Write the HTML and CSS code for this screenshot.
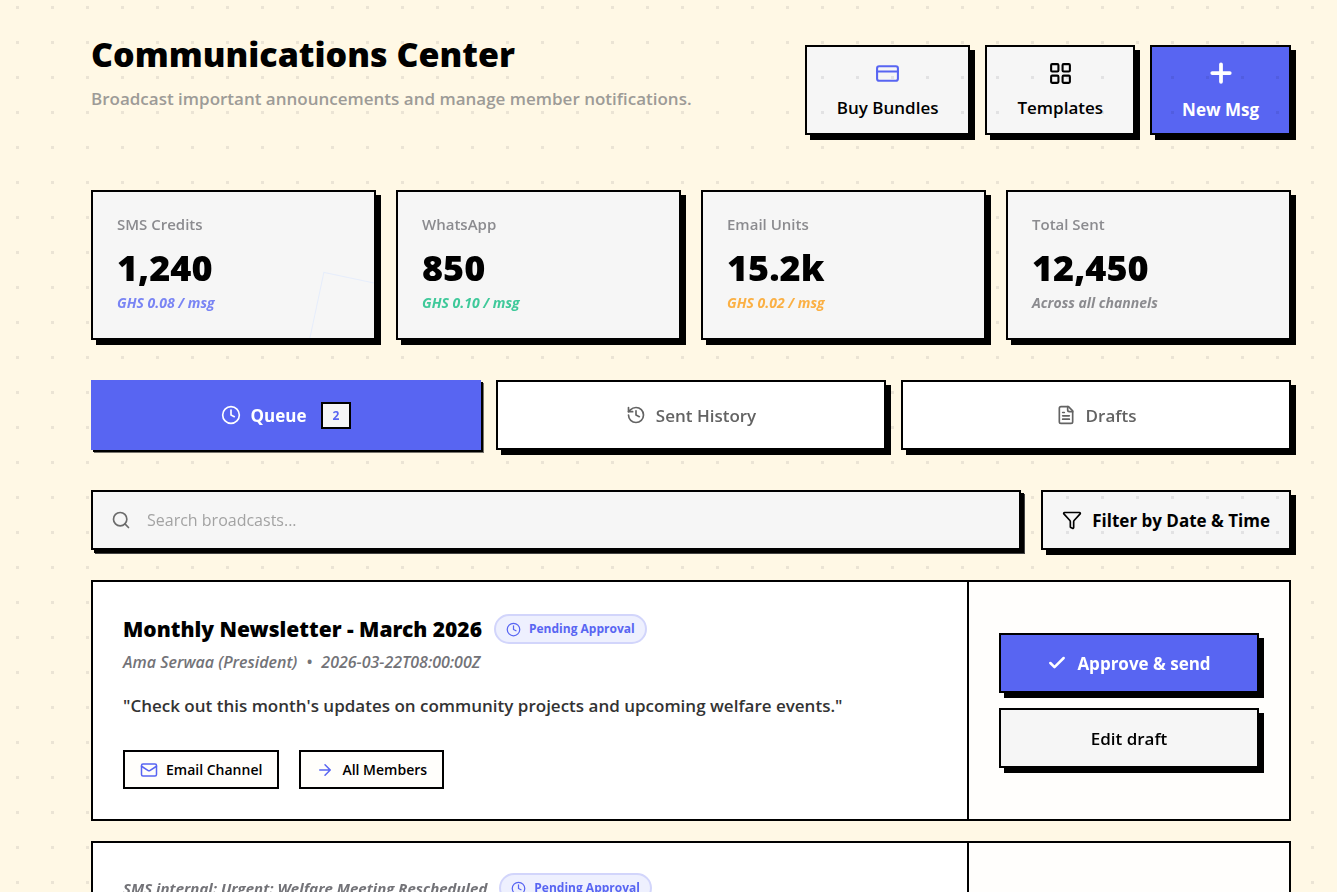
FILE: index.html
```html
<!DOCTYPE html>
<html lang="en">
<head>
<meta charset="utf-8">
<title>Communications Center</title>
<meta name="viewport" content="width=device-width, initial-scale=1">
<link rel="stylesheet" href="styles.css">
</head>
<body>
<svg class="sprite" aria-hidden="true">
  <symbol id="i-card" viewBox="0 0 24 24"><rect x="2" y="5" width="20" height="14" rx="2"/><path d="M2 10h20"/></symbol>
  <symbol id="i-grid" viewBox="0 0 24 24"><rect x="3" y="3" width="7" height="7" rx="1"/><rect x="14" y="3" width="7" height="7" rx="1"/><rect x="14" y="14" width="7" height="7" rx="1"/><rect x="3" y="14" width="7" height="7" rx="1"/></symbol>
  <symbol id="i-plus" viewBox="0 0 24 24"><path d="M5 12h14M12 5v14"/></symbol>
  <symbol id="i-clock" viewBox="0 0 24 24"><circle cx="12" cy="12" r="10"/><path d="M12 6v6l4 2"/></symbol>
  <symbol id="i-history" viewBox="0 0 24 24"><path d="M3 12a9 9 0 1 0 9-9 9.75 9.75 0 0 0-6.74 2.74L3 8"/><path d="M3 3v5h5M12 7v5l4 2"/></symbol>
  <symbol id="i-file" viewBox="0 0 24 24"><path d="M15 2H6a2 2 0 0 0-2 2v16a2 2 0 0 0 2 2h12a2 2 0 0 0 2-2V7Z"/><path d="M14 2v4a2 2 0 0 0 2 2h4M10 9H8M16 13H8M16 17H8"/></symbol>
  <symbol id="i-search" viewBox="0 0 24 24"><circle cx="11" cy="11" r="8"/><path d="m21 21-4.3-4.3"/></symbol>
  <symbol id="i-funnel" viewBox="0 0 24 24"><path d="M10 20a1 1 0 0 0 .553.895l2 1A1 1 0 0 0 14 21v-7a2 2 0 0 1 .517-1.341L21.74 4.67A1 1 0 0 0 21 3H3a1 1 0 0 0-.742 1.67l7.225 7.989A2 2 0 0 1 10 14z"/></symbol>
  <symbol id="i-mail" viewBox="0 0 24 24"><rect x="2" y="4" width="20" height="16" rx="2"/><path d="m22 7-8.97 5.7a1.94 1.94 0 0 1-2.06 0L2 7"/></symbol>
  <symbol id="i-arrow" viewBox="0 0 24 24"><path d="M5 12h14M12 5l7 7-7 7"/></symbol>
  <symbol id="i-check" viewBox="0 0 24 24"><path d="M20 6 9 17l-5-5"/></symbol>
</svg>

<main class="page">
  <header class="header">
    <div class="heading">
      <h1 class="title">Communications Center</h1>
      <p class="subtitle">Broadcast important announcements and manage member notifications.</p>
    </div>
    <div class="header-actions">
      <button class="btn btn-stack" type="button"><svg class="icon icon-lg accent" aria-hidden="true"><use href="#i-card"/></svg>Buy Bundles</button>
      <button class="btn btn-stack" type="button"><svg class="icon icon-lg" aria-hidden="true"><use href="#i-grid"/></svg>Templates</button>
      <button class="btn btn-stack btn-primary" type="button"><svg class="icon icon-xl" aria-hidden="true"><use href="#i-plus"/></svg>New Msg</button>
    </div>
  </header>

  <section class="stats" aria-label="Credit balances">
    <article class="stat">
      <p class="stat-label">SMS Credits</p>
      <p class="stat-value">1,240</p>
      <p class="stat-note note-blue">GHS 0.08 / msg</p>
      <span class="stat-deco"></span>
    </article>
    <article class="stat">
      <p class="stat-label">WhatsApp</p>
      <p class="stat-value">850</p>
      <p class="stat-note note-green">GHS 0.10 / msg</p>
    </article>
    <article class="stat">
      <p class="stat-label">Email Units</p>
      <p class="stat-value">15.2k</p>
      <p class="stat-note note-orange">GHS 0.02 / msg</p>
    </article>
    <article class="stat">
      <p class="stat-label">Total Sent</p>
      <p class="stat-value">12,450</p>
      <p class="stat-note note-gray">Across all channels</p>
    </article>
  </section>

  <nav class="tabs" aria-label="Broadcast views">
    <button class="tab tab-active" type="button"><svg class="icon" aria-hidden="true"><use href="#i-clock"/></svg>Queue<span class="count">2</span></button>
    <button class="tab" type="button"><svg class="icon" aria-hidden="true"><use href="#i-history"/></svg>Sent History</button>
    <button class="tab" type="button"><svg class="icon" aria-hidden="true"><use href="#i-file"/></svg>Drafts</button>
  </nav>

  <div class="toolbar">
    <label class="search"><svg class="icon" aria-hidden="true"><use href="#i-search"/></svg><input class="search-input" type="text" placeholder="Search broadcasts..." aria-label="Search broadcasts"></label>
    <button class="btn btn-filter" type="button"><svg class="icon" aria-hidden="true"><use href="#i-funnel"/></svg>Filter by Date &amp; Time</button>
  </div>

  <section class="list" aria-label="Queued broadcasts">
    <article class="item">
      <div class="item-body">
        <div class="item-head">
          <h2 class="item-title">Monthly Newsletter - March 2026</h2>
          <span class="pill"><svg class="icon icon-xs" aria-hidden="true"><use href="#i-clock"/></svg>Pending Approval</span>
        </div>
        <p class="meta"><span>Ama Serwaa (President)</span><span>•</span><span>2026-03-22T08:00:00Z</span></p>
        <p class="message">"Check out this month's updates on community projects and upcoming welfare events."</p>
        <div class="chips">
          <span class="chip"><svg class="icon icon-sm accent" aria-hidden="true"><use href="#i-mail"/></svg>Email Channel</span>
          <span class="chip"><svg class="icon icon-sm accent" aria-hidden="true"><use href="#i-arrow"/></svg>All Members</span>
        </div>
      </div>
      <div class="item-actions">
        <button class="btn btn-wide btn-primary" type="button"><svg class="icon icon-bold" aria-hidden="true"><use href="#i-check"/></svg>Approve &amp; send</button>
        <button class="btn btn-wide" type="button">Edit draft</button>
      </div>
    </article>
    <article class="item">
      <div class="item-body">
        <div class="item-head item-head-plain">
          <h2 class="item-note">SMS internal: Urgent: Welfare Meeting Rescheduled</h2>
          <span class="pill"><svg class="icon icon-xs" aria-hidden="true"><use href="#i-clock"/></svg>Pending Approval</span>
        </div>
      </div>
      <div class="item-actions"></div>
    </article>
  </section>
</main>
</body>
</html>
```
FILE: styles.css
```css
:root {
  --blue: #5865f2;
  --cream: #fff8e5;
  --panel: #f6f6f6;
  --text: "Open Sans", "Noto Sans", sans-serif;
  --display: "Noto Sans", "Open Sans", sans-serif;
}

* { box-sizing: border-box; }

body {
  margin: 0;
  background: var(--cream);
  color: #000;
  font-family: var(--text);
  font-size: 17px;
  line-height: 25px;
}

/* dotted texture laid over the page, below the raised sections */
body::before {
  content: "";
  position: fixed;
  inset: 0;
  z-index: 1;
  pointer-events: none;
  background-image: conic-gradient(from 90deg at 32px 32px, rgba(0, 0, 20, 0.08) 90deg, transparent 0);
  background-size: 35px 35px;
  background-position: 19px 9px;
}

h1, h2, p { margin: 0; }
button, input { font: inherit; color: inherit; }
button { cursor: pointer; }

.sprite { display: none; }

.icon {
  flex: none;
  width: 20px;
  height: 20px;
  fill: none;
  stroke: currentColor;
  stroke-width: 2;
  stroke-linecap: round;
  stroke-linejoin: round;
}
.icon-xs { width: 15px; height: 15px; }
.icon-sm { width: 18px; height: 18px; }
.icon-lg { width: 25px; height: 25px; }
.icon-xl { width: 30px; height: 30px; stroke-width: 3; }
.icon-bold { stroke-width: 3; }
.accent { color: var(--blue); }

.page { padding: 34px 46px 40px 91px; }

.header {
  display: flex;
  justify-content: space-between;
  gap: 20px;
  margin-bottom: 55px;
}
.title {
  font-family: var(--display);
  font-size: 34px;
  line-height: 40px;
  font-weight: 900;
}
.subtitle {
  margin-top: 12px;
  line-height: 26px;
  font-weight: 600;
  color: #9d9b97;
}
.header-actions {
  display: flex;
  gap: 15px;
  padding-top: 11px;
}

.btn {
  display: flex;
  align-items: center;
  justify-content: center;
  gap: 10px;
  border: 2px solid #000;
  background: var(--panel);
  box-shadow: 5px 5px 0 #000;
  font-weight: 600;
  white-space: nowrap;
}
.btn-primary {
  background: var(--blue);
  color: #fff;
  font-weight: 700;
}
.btn-stack {
  flex-direction: column;
  gap: 9px;
  height: 90px;
  padding: 0 30px;
}

.stats, .tabs, .search, .list {
  position: relative;
  z-index: 2;
}

.stats {
  display: grid;
  grid-template-columns: repeat(4, 1fr);
  gap: 20px;
  margin-bottom: 40px;
}
.stat {
  position: relative;
  overflow: hidden;
  padding: 22px 24px 25px;
  border: 2px solid #000;
  background: var(--panel);
  box-shadow: 5px 5px 0 #000;
}
.stat-label {
  font-size: 15px;
  line-height: 20px;
  font-weight: 600;
  color: #8b8b8f;
}
.stat-value {
  margin: 14px 0 5px;
  font-family: var(--display);
  font-size: 36px;
  line-height: 40px;
  font-weight: 900;
}
.stat-note {
  font-size: 14px;
  line-height: 20px;
  font-weight: 700;
  font-style: italic;
}
.note-blue { color: #7984f4; }
.note-green { color: #3fc99a; }
.note-orange { color: #fbb044; }
.note-gray { color: #8b8b8f; }
.stat-deco {
  position: absolute;
  right: -38px;
  bottom: -43px;
  width: 100px;
  height: 100px;
  border: 1px solid #e6edfb;
  transform: rotate(12deg);
}

.tabs {
  display: grid;
  grid-template-columns: repeat(3, 1fr);
  gap: 15px;
  margin-bottom: 40px;
}
.tab {
  display: flex;
  align-items: center;
  justify-content: center;
  gap: 10px;
  height: 70px;
  padding: 0 20px;
  border: 2px solid #000;
  background: #fff;
  box-shadow: 5px 5px 0 #000;
  font-weight: 600;
  color: #636363;
}
.tab-active {
  border-color: var(--blue);
  background: var(--blue);
  box-shadow: 2px 2px 0 #000, 3px 3px 0 #77746c;
  font-weight: 700;
  color: #fff;
}
.count {
  margin-left: 4px;
  padding: 0 10px;
  border: 2px solid #000;
  background: var(--panel);
  font-size: 12px;
  line-height: 23px;
  color: var(--blue);
}

.toolbar {
  display: flex;
  gap: 20px;
  margin-bottom: 30px;
}
.search {
  flex: 1;
  display: flex;
  align-items: center;
  gap: 16px;
  height: 60px;
  padding: 0 18px;
  border: 2px solid #000;
  background: var(--panel);
  box-shadow: 3px 3px 0 #000, 4px 4px 0 #444;
  color: #6b6b6b;
}
.search-input {
  flex: 1;
  min-width: 0;
  padding: 0;
  border: 0;
  outline: 0;
  background: transparent;
  font-size: 16px;
}
.search-input::placeholder { color: #a3a3a3; opacity: 1; }
.btn-filter {
  padding: 0 19px;
  font-weight: 700;
}

.list {
  display: grid;
  gap: 20px;
}
.item {
  display: flex;
  min-height: 241px;
  border: 2px solid #000;
  background: #fff;
}
.item-body {
  flex: 1;
  padding: 30px;
}
.item-head {
  display: flex;
  align-items: center;
  gap: 12px;
  min-height: 34px;
}
.item-head-plain { min-height: 30px; }
.item-title {
  font-family: var(--display);
  font-size: 21px;
  line-height: 28px;
  font-weight: 900;
}
.pill {
  display: inline-flex;
  align-items: center;
  gap: 8px;
  padding: 0 10px;
  border: 2px solid #d2d5fb;
  border-radius: 15px;
  background: #eef0fe;
  font-size: 12px;
  line-height: 26px;
  font-weight: 700;
  color: var(--blue);
}
.meta, .item-note {
  line-height: 24px;
  font-style: italic;
  color: #737378;
}
.meta {
  display: flex;
  gap: 9px;
  margin-top: 4px;
  font-size: 16px;
  font-weight: 600;
}
.item-note {
  font-size: 15px;
  font-weight: 700;
}
.message {
  margin: 18px 0 30px;
  line-height: 28px;
  font-weight: 600;
  color: #333;
}
.chips {
  display: flex;
  gap: 20px;
}
.chip {
  display: flex;
  align-items: center;
  gap: 8px;
  padding: 5px 15px;
  border: 2px solid #000;
  background: #fffefb;
  font-size: 14px;
  font-weight: 600;
}
.item-actions {
  flex: none;
  display: flex;
  flex-direction: column;
  justify-content: center;
  gap: 15px;
  width: 322px;
  padding: 0 30px;
  border-left: 2px solid #000;
  background: #fffefc;
}
.btn-wide {
  height: 60px;
  padding: 0 20px;
}
```
